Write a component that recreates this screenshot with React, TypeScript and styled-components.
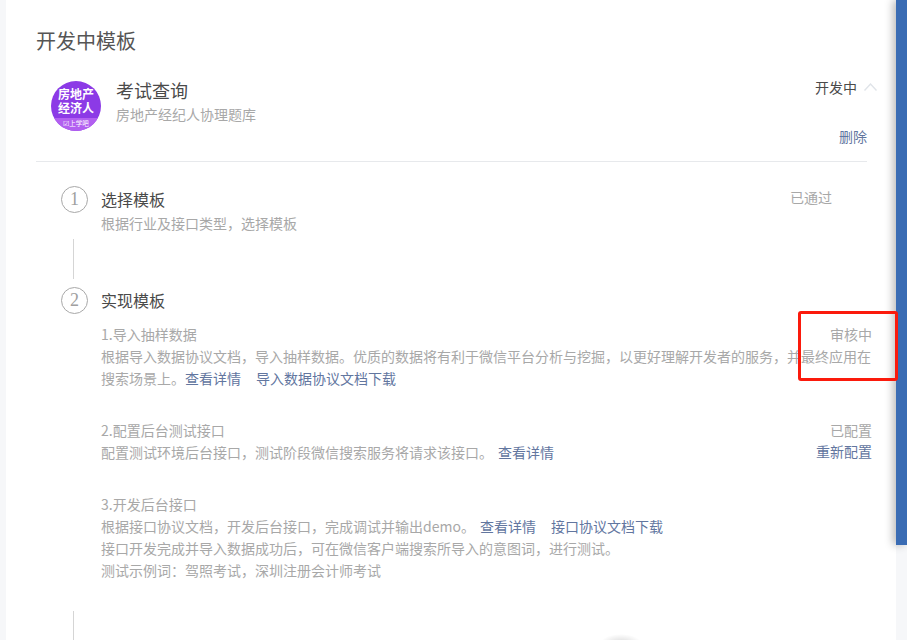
import React from "react";
import styled, { createGlobalStyle } from "styled-components";

const Global = createGlobalStyle`
  html, body { margin: 0; padding: 0; height: 100%; overflow: hidden; background: #f6f7f9; }
  body { font-family: "Noto Sans CJK SC", "Noto Sans", sans-serif; font-size: 14px; color: #353535; }
  * { box-sizing: border-box; }
`;

const Page = styled.div`
  position: relative;
  display: flex;
  width: 907px;
  height: 640px;
  overflow: hidden;
  padding-left: 6px;
`;

const Panel = styled.main`
  width: 890px;
  flex: none;
  background: #fff;
  padding: 25px 29px 0 30px;
`;

const SideBar = styled.div`
  width: 11px;
  height: 545px;
  flex: none;
  background: #3a6cb4;
  box-shadow: -3px 0 9px rgba(0, 0, 0, 0.28);
`;

const PageTitle = styled.h1`
  margin: 0 0 22px;
  font-size: 20px;
  font-weight: 400;
  line-height: 32px;
  color: #555;
`;

const CardHeader = styled.header`
  display: flex;
  height: 83px;
  padding-left: 15px;
  border-bottom: 1px solid #e7e9ec;
`;

const Avatar = styled.div`
  width: 50px;
  height: 50px;
  margin-top: 2px;
  flex: none;
  display: flex;
  flex-direction: column;
  border-radius: 50%;
  overflow: hidden;
  background: #8c3ae6;
  color: #fff;
  text-align: center;
`;

const AvatarTitle = styled.div`
  flex: 1;
  padding-top: 6px;
  font-size: 12px;
  font-weight: 700;
  line-height: 14px;
`;

const AvatarBrand = styled.div`
  height: 13px;
  background: #b25ff0;
  font-size: 6.5px;
  line-height: 11px;
`;

const CardInfo = styled.div`
  flex: 1;
  margin-left: 15px;
  margin-top: -1px;
`;

const CardName = styled.div`
  font-size: 18px;
  line-height: 24px;
  color: #4a4a4a;
`;

const Muted = styled.div`
  line-height: 22px;
  color: #a8a8a8;
`;

const CardSub = styled(Muted)`
  line-height: 24px;
`;

const CardActions = styled.div`
  display: flex;
  flex-direction: column;
  align-items: flex-end;
`;

const DevStatus = styled.div`
  display: flex;
  align-items: center;
  gap: 7px;
  margin-right: -10px;
  line-height: 16px;
  color: #4a4a4a;
`;

const Link = styled.a`
  color: #62769f;
  text-decoration: none;
  margin-left: ${(p: { $gap?: number }) => p.$gap ?? 0}px;
`;

const DeleteLink = styled(Link)`
  margin-top: 33px;
  line-height: 16px;
`;

const Steps = styled.div`
  margin-right: -5px;
  padding-top: 24px;
`;

const Step = styled.section`
  display: flex;
  gap: 13px;
  padding-left: 25px;
`;

const StepNumber = styled.div`
  width: 27px;
  height: 27px;
  flex: none;
  display: flex;
  align-items: center;
  justify-content: center;
  border: 1px solid #a8a8a8;
  border-radius: 50%;
  font-family: "Liberation Serif", serif;
  font-size: 18px;
  color: #a0a0a0;
`;

const StepBody = styled.div`
  flex: 1;
  min-width: 0;
`;

const StepHead = styled.div`
  display: flex;
  justify-content: space-between;
  padding-right: ${(p: { $inset?: number }) => p.$inset ?? 0}px;
`;

const StepTitle = styled.h2`
  margin: 0;
  font-size: 16px;
  font-weight: 400;
  line-height: 27px;
  color: #4a4a4a;
`;

const StepSub = styled(Muted)`
  margin-top: -1px;
`;

const Connector = styled.div`
  width: 1px;
  height: ${(p: { $h: number }) => p.$h}px;
  margin: ${(p: { $top: number; $h: number; $bottom: number }) => `${p.$top}px 0 ${p.$bottom}px 37px`};
  background: #d5d5d5;
`;

const SubItem = styled.div`
  margin-top: ${(p: { $top: number }) => p.$top}px;
`;

const Row = styled.div`
  display: flex;
  justify-content: space-between;
`;

const Highlight = styled.div`
  position: absolute;
  left: 798px;
  top: 311px;
  width: 100px;
  height: 70px;
  border: 3px solid #fb1a0c;
  border-radius: 3px;
`;

const Blob = styled.div`
  position: absolute;
  left: 600px;
  top: 634px;
  width: 42px;
  height: 20px;
  border-radius: 50%;
  background: radial-gradient(closest-side, rgba(0, 0, 0, 0.16), rgba(0, 0, 0, 0));
`;

export default function App() {
  return (
    <>
      <Global />
      <Page>
        <Panel>
          <PageTitle>开发中模板</PageTitle>
          <CardHeader>
            <Avatar>
              <AvatarTitle>
                房地产
                <br />
                经济人
              </AvatarTitle>
              <AvatarBrand>☑上学吧</AvatarBrand>
            </Avatar>
            <CardInfo>
              <CardName>考试查询</CardName>
              <CardSub>房地产经纪人协理题库</CardSub>
            </CardInfo>
            <CardActions>
              <DevStatus>
                开发中
                <svg width="13" height="8" viewBox="0 0 13 8" fill="none" stroke="#e0e4e9" strokeWidth="1.4">
                  <polyline points="0.5,7.5 6.5,1 12.5,7.5" />
                </svg>
              </DevStatus>
              <DeleteLink>删除</DeleteLink>
            </CardActions>
          </CardHeader>
          <Steps>
            <Step>
              <StepNumber>1</StepNumber>
              <StepBody>
                <StepHead $inset={40}>
                  <StepTitle>选择模板</StepTitle>
                  <Muted>已通过</Muted>
                </StepHead>
                <StepSub>根据行业及接口类型&#xFF0C;选择模板</StepSub>
              </StepBody>
            </Step>
            <Connector $top={5} $h={40} $bottom={8} />
            <Step>
              <StepNumber>2</StepNumber>
              <StepBody>
                <StepTitle>实现模板</StepTitle>
                <SubItem $top={9}>
                  <Row>
                    <Muted>1.导入抽样数据</Muted>
                    <Muted>审核中</Muted>
                  </Row>
                  <Muted>
                    根据导入数据协议文档&#xFF0C;导入抽样数据。优质的数据将有利于微信平台分析与挖掘&#xFF0C;以更好理解开发者的服务&#xFF0C;并最终应用在搜索场景上。
                    <Link>查看详情</Link>
                    <Link $gap={15}>导入数据协议文档下载</Link>
                  </Muted>
                </SubItem>
                <SubItem $top={30}>
                  <Row>
                    <Muted>2.配置后台测试接口</Muted>
                    <Muted>已配置</Muted>
                  </Row>
                  <Row>
                    <Muted>
                      配置测试环境后台接口&#xFF0C;测试阶段微信搜索服务将请求该接口。
                      <Link $gap={5}>查看详情</Link>
                    </Muted>
                    <Link>重新配置</Link>
                  </Row>
                </SubItem>
                <SubItem $top={30}>
                  <Muted>3.开发后台接口</Muted>
                  <Muted>
                    根据接口协议文档&#xFF0C;开发后台接口&#xFF0C;完成调试并输出demo。
                    <Link $gap={5}>查看详情</Link>
                    <Link $gap={15}>接口协议文档下载</Link>
                  </Muted>
                  <Muted>接口开发完成并导入数据成功后&#xFF0C;可在微信客户端搜索所导入的意图词&#xFF0C;进行测试。</Muted>
                  <Muted>测试示例词&#xFF1A;驾照考试&#xFF0C;深圳注册会计师考试</Muted>
                </SubItem>
              </StepBody>
            </Step>
            <Connector $top={30} $h={40} $bottom={0} />
          </Steps>
        </Panel>
        <SideBar />
        <Highlight />
        <Blob />
      </Page>
    </>
  );
}
